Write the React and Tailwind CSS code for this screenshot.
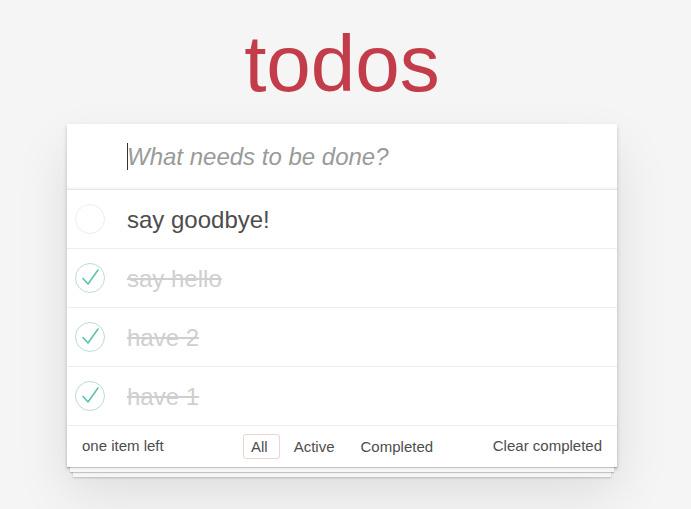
const todos = [
  { id: 1, title: "say goodbye!", done: false },
  { id: 2, title: "say hello", done: true },
  { id: 3, title: "have 2", done: true },
  { id: 4, title: "have 1", done: true },
]

const Toggle = ({ done }) => (
  <svg width="30" height="30" viewBox="0 0 30 30" className="shrink-0">
    <circle cx="15" cy="15" r="14.5" fill="none" stroke={done ? "#bddad5" : "#ededed"} strokeWidth="1" />
    {done && (
      <path d="M8 15.5 L13 21 L23 7" fill="none" stroke="#5dc2af" strokeWidth="1.6" strokeLinecap="round" strokeLinejoin="round" />
    )}
  </svg>
)

const App = () => {
  return (
    <div
      className="min-h-[509px] bg-[#f5f5f5] pt-[18px] pb-10 text-[#4d4d4d]"
      style={{ fontFamily: '"Liberation Sans", Arial, sans-serif' }}
    >
      <div className="ml-[67px] w-[550px]">
        <h1 className="text-center text-[80px] leading-[92px] font-normal text-[#c33c4a] mb-[14px]">todos</h1>

        <div className="bg-white shadow-[0_2px_4px_rgba(0,0,0,0.2),0_25px_50px_rgba(0,0,0,0.1)]">
          <div className="relative h-[65px] shadow-[inset_0_-2px_1px_rgba(0,0,0,0.03)]">
            <input
              className="h-full w-full bg-transparent pl-[60px] pr-4 text-[24px] italic text-[#4d4d4d] outline-none placeholder:text-[#9a9a9a]"
              placeholder="What needs to be done?"
            />
            <span className="absolute left-[60px] top-[19px] h-[27px] w-px bg-[#333]" />
          </div>

          <ul className="border-t border-[#e6e6e6]">
            {todos.map((t) => (
              <li key={t.id} className="flex h-[59px] items-center border-b border-[#ededed]">
                <div className="flex w-[60px] pl-2">
                  <Toggle done={t.done} />
                </div>
                <span
                  className={
                    t.done
                      ? "text-[24px] leading-[29px] text-[#cfcfcf] line-through"
                      : "text-[24px] leading-[29px] text-[#4d4d4d]"
                  }
                >
                  {t.title}
                </span>
              </li>
            ))}
          </ul>

          <footer className="relative flex h-[41px] items-center px-[15px] text-[15px] text-[#4d4d4d]">
            <div className="pointer-events-none absolute inset-x-0 bottom-0 h-[50px] overflow-hidden shadow-[0_1px_1px_rgba(0,0,0,0.2),0_8px_0_-3px_#f6f6f6,0_9px_1px_-3px_rgba(0,0,0,0.2),0_16px_0_-6px_#f6f6f6,0_17px_2px_-6px_rgba(0,0,0,0.2)]" />
            <span className="relative flex-1">one item left</span>
            <ul className="absolute left-[173px] flex items-center">
              <li>
                <a className="m-[3px] block rounded-[3px] border border-[rgba(206,70,70,0.25)] pl-[7px] pr-[11px] py-[3px] leading-[17px]">All</a>
              </li>
              <li>
                <a className="m-[3px] block rounded-[3px] border border-transparent pl-[7px] pr-[11px] py-[3px] leading-[17px]">Active</a>
              </li>
              <li>
                <a className="m-[3px] block rounded-[3px] border border-transparent pl-[7px] pr-[11px] py-[3px] leading-[17px]">Completed</a>
              </li>
            </ul>
            <span className="relative">Clear completed</span>
          </footer>
        </div>
      </div>
    </div>
  )
}

export default App
